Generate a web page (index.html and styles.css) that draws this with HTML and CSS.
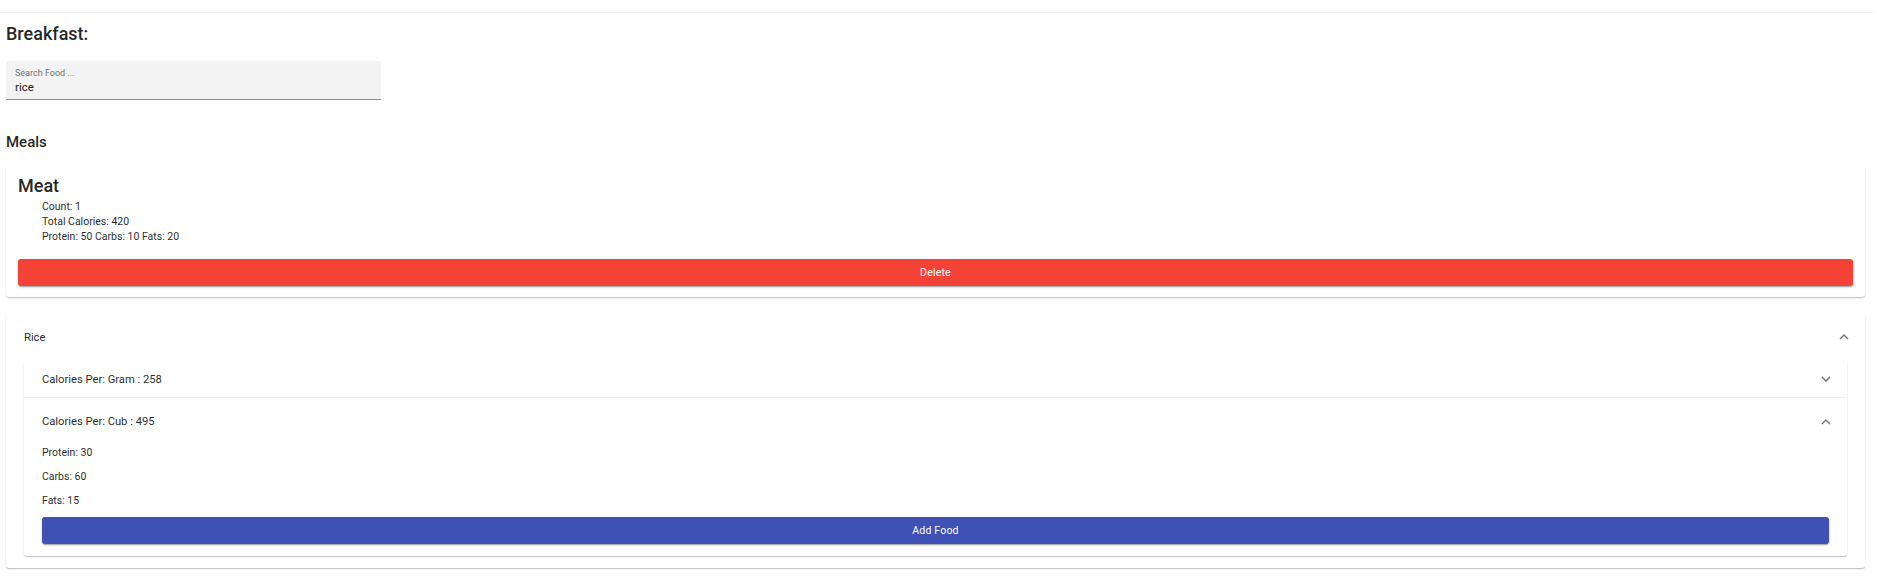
FILE: index.html
```html
<!DOCTYPE html>
<html>
<head>
<meta charset="utf-8">
<link rel="stylesheet" href="styles.css">
</head>
<body>
<div class="top-edge"></div>
<div class="page">
  <h2 class="title">Breakfast:</h2>
  <div class="search">
    <label class="search-label">Search Food ...</label>
    <div class="search-input">rice</div>
  </div>
  <h3 class="section">Meals</h3>
  <div class="card meal">
    <div class="meal-name">Meat</div>
    <ul class="meal-info">
      <li>Count: 1</li>
      <li>Total Calories: 420</li>
      <li>Protein: 50 Carbs: 10 Fats: 20</li>
    </ul>
    <button class="btn btn-red">Delete</button>
  </div>
  <div class="card acc">
    <div class="acc-summary acc-summary-lg">
      <span>Rice</span>
      <svg class="chev" viewBox="0 0 24 24"><path d="M12 8l-6 6 1.41 1.41L12 10.83l4.59 4.58L18 14z"/></svg>
    </div>
    <div class="acc-details">
      <div class="inner inner-first">
        <div class="acc-summary acc-summary-sm">
          <span>Calories Per: Gram : 258</span>
          <svg class="chev" viewBox="0 0 24 24"><path d="M16.59 8.59 12 13.17 7.41 8.59 6 10l6 6 6-6z"/></svg>
        </div>
      </div>
      <div class="inner inner-last">
        <div class="acc-summary acc-summary-lg">
          <span>Calories Per: Cub : 495</span>
          <svg class="chev" viewBox="0 0 24 24"><path d="M12 8l-6 6 1.41 1.41L12 10.83l4.59 4.58L18 14z"/></svg>
        </div>
        <div class="inner-details">
          <p>Protein: 30</p>
          <p>Carbs: 60</p>
          <p>Fats: 15</p>
          <button class="btn btn-blue">Add Food</button>
        </div>
      </div>
    </div>
  </div>
</div>
</body>
</html>
```

FILE: styles.css
```css
* { box-sizing: border-box; }
body {
  margin: 0;
  font-family: Roboto, "Liberation Sans", sans-serif;
  color: rgba(0,0,0,0.87);
  background: #fff;
}
.top-edge {
  height: 13px;
  width: calc(100% - 2px);
  border-bottom: 1px solid #f1f1f1;
  border-bottom-right-radius: 3px;
}
.page {
  padding: 0 12px 20px 6px;
}
.title {
  margin: 9px 0 0;
  font-size: 18px;
  line-height: 24px;
  font-weight: 500;
}
.search {
  margin-top: 15px;
  width: 375px;
  height: 39px;
  background: #f3f3f3;
  border-radius: 3px 3px 0 0;
  border-bottom: 1px solid #8f8f8f;
  padding: 7px 9px 0;
}
.search-label {
  display: block;
  font-size: 9px;
  line-height: 10px;
  color: #6f6f6f;
}
.search-input {
  margin-top: 2px;
  font-size: 11.5px;
  line-height: 14px;
  color: #222;
}
.section {
  margin: 33px 0 0;
  font-size: 15px;
  line-height: 18px;
  font-weight: 500;
}
.card {
  background: #fff;
  border-radius: 3px;
  box-shadow: 0 1px 1px -1px rgba(0,0,0,0.2), 0 1px 1px 0 rgba(0,0,0,0.14), 0 1px 2px 0 rgba(0,0,0,0.12);
}
.meal {
  margin-top: 15px;
  padding: 8px 12px 11px;
}
.meal-name {
  font-size: 18px;
  line-height: 24px;
  font-weight: 500;
}
.meal-info {
  list-style: none;
  margin: 1px 0 0;
  padding: 0 0 0 24px;
  font-size: 10.5px;
  line-height: 15px;
}
.btn {
  display: block;
  width: 100%;
  height: 27px;
  border: 0;
  border-radius: 3px;
  color: #fff;
  font-family: Roboto, "Liberation Sans", sans-serif;
  font-size: 10.5px;
  font-weight: 400;
  letter-spacing: 0.2px;
  box-shadow: 0 2px 1px -1px rgba(0,0,0,0.2), 0 1px 2px 0 rgba(0,0,0,0.14), 0 1px 3px 0 rgba(0,0,0,0.12);
}
.btn-red {
  margin-top: 15px;
  background: #f44336;
}
.btn-blue {
  background: #3f51b5;
}
.acc {
  margin-top: 16px;
}
.acc-summary {
  display: flex;
  align-items: center;
  justify-content: space-between;
  padding: 0 12px 0 18px;
  font-size: 11.2px;
}
.acc-summary-lg { height: 48px; }
.acc-summary-sm { height: 36px; }
.chev {
  width: 18px;
  height: 18px;
  fill: rgba(0,0,0,0.54);
}
.acc-details {
  padding: 0 18px 12px;
}
.inner {
  background: #fff;
  box-shadow: 0 1px 1px -1px rgba(0,0,0,0.2), 0 1px 1px 0 rgba(0,0,0,0.14), 0 1px 2px 0 rgba(0,0,0,0.12);
}
.inner-first {
  border-radius: 3px 3px 0 0;
}
.inner-last {
  border-radius: 0 0 3px 3px;
  border-top: 1px solid rgba(0,0,0,0.06);
}
.inner-last .acc-summary-lg { height: 47px; }
.inner-details {
  display: flex;
  flex-direction: column;
  gap: 9px;
  padding: 0 18px 12px;
}
.inner-details p {
  margin: 0;
  font-size: 10.5px;
  line-height: 15px;
}
```
